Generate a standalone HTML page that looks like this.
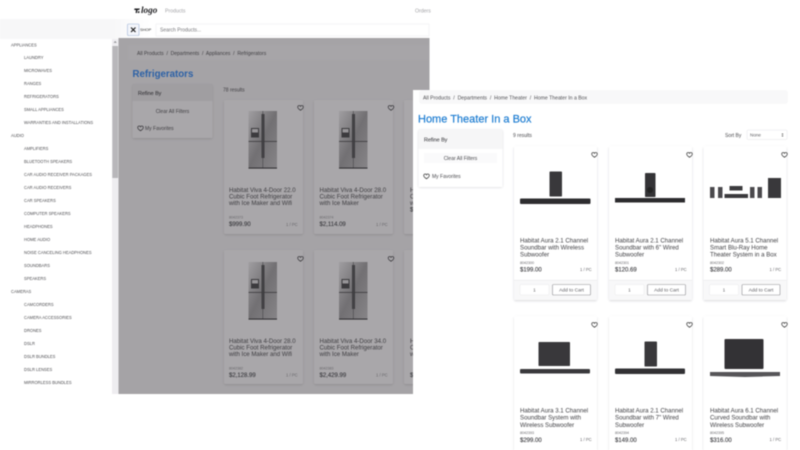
<!DOCTYPE html>
<html><head><meta charset="utf-8"><style>
html,body{margin:0;padding:0;background:#fff;width:800px;height:450px;overflow:hidden}
svg{display:block;filter:blur(.45px)}
text{font-family:"Liberation Sans",sans-serif;white-space:pre}
.s{font-size:4.1px;fill:#4c4c50}
.l{font-size:6.1px;fill:#3f3e42}
.t{font-size:6.1px;fill:#3f3f43}
.k{font-size:3.6px;fill:#68676b}
.p{font-size:6px;fill:#3c3c40;stroke:#3c3c40;stroke-width:.12}
.u{font-size:4.2px;fill:#68676b}
.b{font-size:5px;fill:#4b4b4f}
.g{font-size:5px;fill:#403f43}
</style></head><body>
<svg width="800" height="450" viewBox="0 0 800 450" xmlns="http://www.w3.org/2000/svg">
<defs>
<filter id="sh" x="-10%" y="-10%" width="120%" height="120%"><feGaussianBlur stdDeviation="1.1"/></filter>
<linearGradient id="fg" x1="0" y1="0" x2="1" y2="1"><stop offset="0" stop-color="#a09ea1"/><stop offset=".5" stop-color="#727073"/><stop offset="1" stop-color="#878588"/></linearGradient>
<linearGradient id="top" x1="0" x2="1" y1="0" y2="0"><stop offset="0" stop-color="#f7f7f8"/><stop offset=".75" stop-color="#f7f7f8"/><stop offset="1" stop-color="#fff"/></linearGradient>
<g id="fr">
<rect width="28.5" height="57.5" fill="url(#fg)"/>
<rect x="13" y="3" width="3" height="44" fill="#3f3e41"/>
<rect x="0" y="30" width="28.5" height=".8" fill="#3a393c"/>
<rect x="14" y="0" width=".6" height="57" fill="#48474a"/>
<rect x="2.5" y="17" width="8" height="9.5" fill="#3c3b3e"/>
<rect x="3.5" y="18" width="6" height="3.5" fill="#979598"/>
<rect x="0" y="56.6" width="28.5" height="1" fill="#2a292c"/>
</g>
<path id="h" d="M0 -1.1C.5 -2.3 2.8 -2.4 2.8 -.4C2.8 1 1 2 0 2.8C-1 2 -2.8 1 -2.8 -.4C-2.8 -2.4 -.5 -2.3 0 -1.1Z" fill="none" stroke-width=".7"/>
<g id="cl"><rect x="0" y="1" width="79" height="134" rx="2" fill="#908e91" filter="url(#sh)"/><rect width="79" height="134" rx="1.5" fill="#a9a7aa"/></g>
<g id="cr"><rect x="0" y="1" width="83" height="154" rx="2" fill="#d8d8dc" filter="url(#sh)"/><rect x="0" y="0" width="83" height="154" fill="#fff"/><rect x="0" y="134" width="83" height="20" fill="#f8f8f9"/><rect x="0" y="134" width="83" height=".5" fill="#e6e6e8"/>
<rect x="6" y="138.5" width="29" height="10.5" rx="1" fill="#fff" stroke="#e9e9eb" stroke-width=".5"/>
<rect x="38.5" y="138.5" width="38" height="10.5" rx="1" fill="#fff" stroke="#8f8f93" stroke-width=".6"/>
<text x="20.5" y="145.5" font-size="4.3" fill="#55555a" text-anchor="middle">1</text>
<text x="57.5" y="145.5" font-size="4.9" fill="#5c5c61" text-anchor="middle">Add to Cart</text></g>
<g id="cr2"><rect x="0" y="1" width="83" height="150" rx="2" fill="#dcdce0" filter="url(#sh)"/><rect x="0" y="0" width="83" height="150" fill="#fff"/></g>
</defs>

<rect width="800" height="450" fill="#fff"/>

<!-- Top nav -->
<rect x="0" y="19" width="150" height="20" fill="url(#top)"/>
<path d="M134.5 8.5H140L139 10H137.5L137 13H135.6L136 10H134.2ZM138 11.2H139.6L139.3 13H137.8Z" fill="#1f1f22"/>
<text x="141" y="13" style="font-family:'Liberation Serif',serif" font-size="9.2" font-weight="bold" font-style="italic" fill="#1f1f22">logo</text>
<text x="165" y="12.3" font-size="5.2" fill="#a3a3a7">Products</text>
<text x="415" y="12.3" font-size="5.2" fill="#a3a3a7">Orders</text>
<rect x="127.5" y="24" width="11.5" height="11.5" rx="1" fill="#f4f6fb" stroke="#9db3d6" stroke-width=".6"/>
<path d="M131 27.5L135.5 32M135.5 27.5L131 32" stroke="#222" stroke-width="1.2"/>
<text x="140" y="31.2" font-size="4" fill="#333">SHOP</text>
<rect x="156" y="24" width="273" height="12" fill="#fff" stroke="#ececee" stroke-width=".5"/>
<text x="160" y="31.7" font-size="5" fill="#76767a">Search Products...</text>

<!-- Sidebar -->
<rect x="0" y="39" width="112" height="355" fill="#fff"/>
<rect x="112" y="39" width="6.5" height="355" fill="#eeedf0"/>
<rect x="112.3" y="46" width="5.8" height="132" fill="#b8b7ba"/>
<path d="M113.6 42.8L115.2 41L116.8 42.8Z" fill="#8a8a8d"/>
<g>
<text class="s" x="11" y="46.4">APPLIANCES</text>
<text class="s" x="24" y="59.2">LAUNDRY</text>
<text class="s" x="24" y="72.2">MICROWAVES</text>
<text class="s" x="24" y="85.2">RANGES</text>
<text class="s" x="24" y="98.2">REFRIGERATORS</text>
<text class="s" x="24" y="111.2">SMALL APPLIANCES</text>
<text class="s" x="24" y="124.2">WARRANTIES AND INSTALLATIONS</text>
<text class="s" x="11" y="137.2">AUDIO</text>
<text class="s" x="24" y="150.2">AMPLIFIERS</text>
<text class="s" x="24" y="163.2">BLUETOOTH SPEAKERS</text>
<text class="s" x="24" y="176.2">CAR AUDIO RECEIVER PACKAGES</text>
<text class="s" x="24" y="189.2">CAR AUDIO RECEIVERS</text>
<text class="s" x="24" y="202.2">CAR SPEAKERS</text>
<text class="s" x="24" y="215.2">COMPUTER SPEAKERS</text>
<text class="s" x="24" y="228.2">HEADPHONES</text>
<text class="s" x="24" y="241.2">HOME AUDIO</text>
<text class="s" x="24" y="254.2">NOISE CANCELING HEADPHONES</text>
<text class="s" x="24" y="267.2">SOUNDBARS</text>
<text class="s" x="24" y="280.2">SPEAKERS</text>
<text class="s" x="11" y="293.2">CAMERAS</text>
<text class="s" x="24" y="306.2">CAMCORDERS</text>
<text class="s" x="24" y="319.2">CAMERA ACCESSORIES</text>
<text class="s" x="24" y="332.2">DRONES</text>
<text class="s" x="24" y="345.2">DSLR</text>
<text class="s" x="24" y="358.2">DSLR BUNDLES</text>
<text class="s" x="24" y="371.2">DSLR LENSES</text>
<text class="s" x="24" y="384.2">MIRRORLESS BUNDLES</text>
</g>

<!-- Overlaid main -->
<rect x="118.5" y="38" width="311" height="356" fill="#a5a3a6"/>
<rect x="128" y="45" width="301" height="15" fill="#a7a5a8"/>
<text class="g" x="137" y="54.8">All Products  /  Departments  /  Appliances  /  Refrigerators</text>
<text x="132.5" y="76.8" font-size="9.7" font-weight="bold" fill="#2c61a6">Refrigerators</text>
<rect x="132.5" y="85" width="80" height="54" rx="2" fill="#908e91" filter="url(#sh)"/>
<rect x="132.5" y="84" width="80" height="54" rx="1" fill="#a9a7aa"/>
<rect x="132.5" y="84" width="80" height="17" fill="#a09ea1"/>
<text x="138" y="95" font-size="5.4" fill="#3c3b3f" stroke="#3c3b3f" stroke-width=".1">Refine By</text>
<text class="g" x="172.5" y="113" text-anchor="middle">Clear All Filters</text>
<use href="#h" x="140.5" y="128" stroke="#333236"/>
<text class="g" x="145" y="130">My Favorites</text>
<text class="g" x="223" y="91.5">78 results</text>

<use href="#cl" x="224" y="100"/><use href="#cl" x="314" y="100"/><use href="#cl" x="404" y="100"/>
<use href="#cl" x="224" y="250"/><use href="#cl" x="314" y="250"/><use href="#cl" x="404" y="250"/>
<use href="#fr" x="248.5" y="111"/><use href="#fr" x="339" y="111"/>
<use href="#fr" x="248.5" y="262"/><use href="#fr" x="339" y="262"/>
<use href="#h" x="300.5" y="107.5" stroke="#333236"/><use href="#h" x="391" y="107.5" stroke="#333236"/>
<use href="#h" x="300.5" y="258.5" stroke="#333236"/><use href="#h" x="391" y="258.5" stroke="#333236"/>

<text class="l" x="229" y="192.2">Habitat Viva 4-Door 22.0</text>
<text class="l" x="229" y="198.7">Cubic Foot Refrigerator</text>
<text class="l" x="229" y="205.2">with Ice Maker and Wifi</text>
<text class="k" x="229" y="218.6">8042373</text>
<text class="p" x="229" y="226.2">$999.90</text>
<text class="u" x="286" y="225.8">1 / PC</text>
<text class="l" x="319.5" y="192.2">Habitat Viva 4-Door 28.0</text>
<text class="l" x="319.5" y="198.7">Cubic Foot Refrigerator</text>
<text class="l" x="319.5" y="205.2">with Ice Maker</text>
<text class="k" x="319.5" y="218.6">8042374</text>
<text class="p" x="319.5" y="226.2">$2,114.09</text>
<text class="u" x="376" y="225.8">1 / PC</text>
<text class="l" x="229" y="343">Habitat Viva 4-Door 28.0</text>
<text class="l" x="229" y="349.5">Cubic Foot Refrigerator</text>
<text class="l" x="229" y="356">with Ice Maker and Wifi</text>
<text class="k" x="229" y="369.6">8042382</text>
<text class="p" x="229" y="377.2">$2,128.99</text>
<text class="u" x="286" y="376.5">1 / PC</text>
<text class="l" x="319.5" y="343">Habitat Viva 4-Door 34.0</text>
<text class="l" x="319.5" y="349.5">Cubic Foot Refrigerator</text>
<text class="l" x="319.5" y="356">with Ice Maker</text>
<text class="k" x="319.5" y="369.6">8042383</text>
<text class="p" x="319.5" y="377.2">$2,429.99</text>
<text class="u" x="376" y="376.5">1 / PC</text>
<text class="l" x="410" y="192.2">Habitat</text><text class="l" x="410" y="198.7">Cubic</text><text class="l" x="410" y="205.2">with</text><text class="p" x="410" y="211.7">$</text>
<text class="l" x="410" y="343">Habitat</text><text class="l" x="410" y="349.5">Cubic</text><text class="l" x="410" y="356">with</text><text class="p" x="410" y="377.2">$</text>

<!-- Right panel -->
<rect x="413" y="90" width="387" height="360" fill="#fff"/>
<rect x="419" y="90" width="369" height="14" rx="3" fill="#f8f8f9"/>
<text x="423" y="99.5" font-size="5.15" fill="#4f4f53">All Products  /  Departments  /  Home Theater  /  Home Theater In a Box</text>
<text x="418" y="122.5" font-size="11" fill="#1a7bd1" stroke="#1a7bd1" stroke-width=".18">Home Theater In a Box</text>
<rect x="418.5" y="130" width="84" height="57.5" rx="2" fill="#d8d8dc" filter="url(#sh)"/>
<rect x="418.5" y="129.5" width="84" height="57.5" rx="1" fill="#fff"/>
<rect x="418.5" y="129.5" width="84" height="19.5" fill="#f6f6f7"/>
<text x="424" y="141.5" font-size="5.4" fill="#4a4a4e" stroke="#4a4a4e" stroke-width=".1">Refine By</text>
<rect x="424" y="153" width="73" height="10" fill="#fafafb"/>
<text class="b" x="460.5" y="160" text-anchor="middle">Clear All Filters</text>
<use href="#h" x="426.5" y="176" stroke="#333"/>
<text class="b" x="432" y="178">My Favorites</text>
<text class="b" x="513" y="137">9 results</text>
<text class="b" x="725" y="137">Sort By</text>
<rect x="747" y="130" width="40" height="9.5" rx="1" fill="#fff" stroke="#e4e4e6" stroke-width=".5"/>
<text x="750" y="136.5" font-size="4.6" fill="#5c5c60">None</text>
<path d="M781.5 134.5L782.5 133.2L783.5 134.5ZM781.5 135.5L782.5 136.8L783.5 135.5Z" fill="#444"/>

<use href="#cr" x="514" y="146"/><use href="#cr" x="609" y="146"/><use href="#cr" x="703.5" y="146"/>
<use href="#cr2" x="514" y="316"/><use href="#cr2" x="609" y="316"/><use href="#cr2" x="703.5" y="316"/>

<use href="#h" x="594.5" y="154.5" stroke="#333"/><use href="#h" x="689.5" y="154.5" stroke="#333"/><use href="#h" x="784.5" y="154.5" stroke="#333"/>
<use href="#h" x="594.5" y="324.5" stroke="#333"/><use href="#h" x="689.5" y="324.5" stroke="#333"/><use href="#h" x="784.5" y="324.5" stroke="#333"/>

<!-- Product 1 -->
<rect x="549.5" y="171.5" width="12.5" height="25" rx=".8" fill="#39383b"/>
<rect x="520" y="198.5" width="70.5" height="5.5" rx="1" fill="#2e2d30"/>
<!-- Product 2 -->
<rect x="645" y="173" width="10.5" height="24" rx=".8" fill="#343336"/>
<circle cx="650" cy="190" r="3" fill="#222"/>
<rect x="615" y="198" width="70" height="4.5" fill="#2c2b2e"/>
<!-- Product 3 -->
<rect x="710" y="187" width="4.5" height="11" fill="#4a494c"/><rect x="718" y="187" width="4.5" height="11" fill="#4a494c"/>
<rect x="729.5" y="186" width="13" height="4.5" fill="#3c3b3e"/><rect x="724.5" y="194" width="23.5" height="4" fill="#3a393c"/>
<rect x="750" y="187" width="4.5" height="11" fill="#4a494c"/><rect x="757.5" y="187" width="4.5" height="11" fill="#4a494c"/>
<rect x="768" y="178" width="13" height="20" fill="#39383b"/>
<!-- Product 4 -->
<rect x="538.5" y="342" width="31.5" height="24" rx=".8" fill="#39383b"/>
<rect x="520" y="369" width="70" height="4.5" rx="1" fill="#3a393c"/>
<!-- Product 5 -->
<rect x="644.5" y="341.5" width="12.5" height="25" rx=".8" fill="#39383b"/>
<rect x="615" y="368.5" width="70" height="5.5" rx="1" fill="#323134"/>
<!-- Product 6 -->
<rect x="724.5" y="339" width="39" height="30" rx="1" fill="#333235"/>
<path d="M710 372L780 372L780 376L745 377L710 376Z" fill="#565558"/>

<text class="t" x="520" y="242.7">Habitat Aura 2.1 Channel</text><text class="t" x="520" y="249.5">Soundbar with Wireless</text><text class="t" x="520" y="256.6">Subwoofer</text>
<text class="k" x="520" y="264">8042300</text><text class="p" x="520" y="271.6">$199.00</text><text class="u" x="580" y="271">1 / PC</text>
<text class="t" x="615" y="242.7">Habitat Aura 2.1 Channel</text><text class="t" x="615" y="249.5">Soundbar with 6" Wired</text><text class="t" x="615" y="256.6">Subwoofer</text>
<text class="k" x="615" y="264">8042301</text><text class="p" x="615" y="271.6">$120.69</text><text class="u" x="675" y="271">1 / PC</text>
<text class="t" x="710" y="242.7">Habitat Aura 5.1 Channel</text><text class="t" x="710" y="249.5">Smart Blu-Ray Home</text><text class="t" x="710" y="256.6">Theater System in a Box</text>
<text class="k" x="710" y="264">8042302</text><text class="p" x="710" y="271.6">$289.00</text><text class="u" x="769.5" y="271">1 / PC</text>

<text class="t" x="520" y="412.7">Habitat Aura 3.1 Channel</text><text class="t" x="520" y="419.7">Soundbar System with</text><text class="t" x="520" y="426.8">Wireless Subwoofer</text>
<text class="k" x="520" y="434">8042393</text><text class="p" x="520" y="441.8">$299.00</text><text class="u" x="580" y="441.2">1 / PC</text>
<text class="t" x="615" y="412.7">Habitat Aura 2.1 Channel</text><text class="t" x="615" y="419.7">Soundbar with 7" Wired</text><text class="t" x="615" y="426.8">Subwoofer</text>
<text class="k" x="615" y="434">8042394</text><text class="p" x="615" y="441.8">$149.00</text><text class="u" x="675" y="441.2">1 / PC</text>
<text class="t" x="710" y="412.7">Habitat Aura 6.1 Channel</text><text class="t" x="710" y="419.7">Curved Soundbar with</text><text class="t" x="710" y="426.8">Wireless Subwoofer</text>
<text class="k" x="710" y="434">8042395</text><text class="p" x="710" y="441.8">$316.00</text><text class="u" x="769.5" y="441.2">1 / PC</text>
</svg>
</body></html>
